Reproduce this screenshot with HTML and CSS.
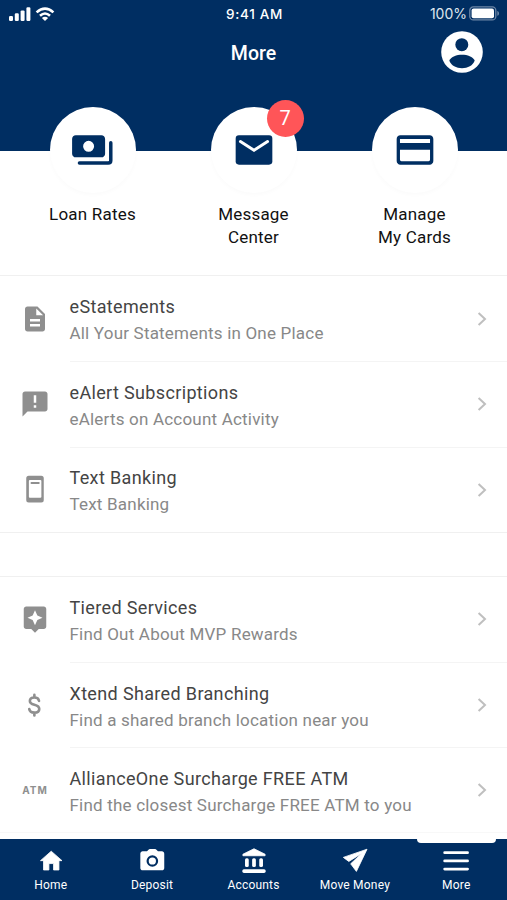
FILE: index.html
```html
<!DOCTYPE html>
<html lang="en">
    <head>
        <title>More</title>

        <meta charset="utf-8" />
        <meta name="viewport" content="width=device-width, initial-scale=1" />

        <link rel="stylesheet" href="styles.css">
    </head>
    <body>
        <div class="screen">
            <div class="header">
                <div class="status">
                    <div class="signal">
                        <svg width="22" height="14" viewBox="0 0 22 14">
                            <rect x="0" y="9" width="4" height="5" rx="1.2" />
                            <rect x="5.8" y="6.3" width="4" height="7.7" rx="1.2" />
                            <rect x="11.6" y="3.4" width="4" height="10.6" rx="1.2" />
                            <rect x="17.4" y="0.3" width="4" height="13.7" rx="1.2" />
                        </svg>
                        <svg class="wifi" width="20" height="14" viewBox="0 0 20 14">
                            <path class="arc" d="M1.6 5.4Q10 -2.2 18.4 5.4M5 8.8Q10 4.2 15 8.8" />
                            <path d="M6.9 11Q10 8.3 13.1 11L10 14Z" />
                        </svg>
                    </div>
                    <div class="time">9:41 AM</div>
                    <div class="battery">
                        100%
                        <svg width="31" height="15" viewBox="0 0 31 15">
                            <rect class="shell" x="0.8" y="0.9" width="26" height="13" rx="3.5" />
                            <rect x="2.6" y="2.6" width="22.4" height="9.6" rx="2" />
                            <path class="cap" d="M28.3 5C30.6 5.6 30.6 9.2 28.3 9.8Z" />
                        </svg>
                    </div>
                </div>
                <div class="titleBar">
                    <h1>More</h1>
                    <svg class="profile" width="42" height="42" viewBox="0 0 42 42">
                        <circle cx="21" cy="21" r="20.8" />
                        <circle class="cut" cx="20.8" cy="13.7" r="6.5" />
                        <path class="cut" d="M8.3 29.5C12 21.8 30 21.8 33.7 29.5C30.5 39.7 11.5 39.7 8.3 29.5Z" />
                    </svg>
                </div>
            </div>

            <div class="shortcuts">
                <div class="shortcut">
                    <div class="circle">
                        <svg width="44" height="44" viewBox="0.4 0 24 24">
                            <path d="M19 14V6c0-1.1-.9-2-2-2H3c-1.1 0-2 .9-2 2v8c0 1.1.9 2 2 2h14c1.1 0 2-.9 2-2zm-9-1a3 3 0 1 1 0-6 3 3 0 0 1 0 6z" />
                            <path class="line" d="M22.1 8v9.7q0 1.4-1.4 1.4H5" />
                        </svg>
                    </div>
                    <span>Loan Rates</span>
                </div>
                <div class="shortcut">
                    <div class="circle">
                        <svg width="44" height="44" viewBox="0 0 24 24">
                            <rect x="2" y="4" width="20" height="16" rx="1.8" />
                            <path class="line flap" d="M4.6 7.4L12 12.1L19.4 7.4" />
                        </svg>
                        <div class="badge">7</div>
                    </div>
                    <span>Message<br>Center</span>
                </div>
                <div class="shortcut">
                    <div class="circle">
                        <svg width="44" height="44" viewBox="0 0 24 24">
                            <path fill-rule="evenodd" d="M20 4H4c-1.1 0-2 .9-2 2v12c0 1.1.9 2 2 2h16c1.1 0 2-.9 2-2V6c0-1.1-.9-2-2-2zM20.2 17.3q0 .8-.8.8H4.6q-.8 0-.8-.8V11.9H20.2zM20.2 8.2H3.8V6h16.4z" />
                        </svg>
                    </div>
                    <span>Manage<br>My Cards</span>
                </div>
            </div>

            <ul class="list">
                <li>
                    <svg class="icon" viewBox="0 0 24 24"><path d="M14 2H6c-1.1 0-2 .9-2 2v16c0 1.1.9 2 2 2h12c1.1 0 2-.9 2-2V8l-6-6zm2 16H8v-2h8v2zm0-4H8v-2h8v2zm-3-5V3.5L18.5 9H13z" /></svg>
                    <div class="entry">
                        <div class="text"><b>eStatements</b><span>All Your Statements in One Place</span></div>
                        <svg class="chevron" viewBox="0 0 10 14"><path d="M1.6 1L8 7L1.6 13" /></svg>
                    </div>
                </li>
                <li>
                    <svg class="icon" viewBox="0 0 24 24"><path d="M20 2H4c-1.1 0-2 .9-2 2v18l4-4h14c1.1 0 2-.9 2-2V4c0-1.1-.9-2-2-2zm-7 13h-2v-2h2v2zm0-4h-2V5h2v6z" /></svg>
                    <div class="entry">
                        <div class="text"><b>eAlert Subscriptions</b><span>eAlerts on Account Activity</span></div>
                        <svg class="chevron" viewBox="0 0 10 14"><path d="M1.6 1L8 7L1.6 13" /></svg>
                    </div>
                </li>
                <li>
                    <svg class="icon" viewBox="0 0 24 24"><path fill-rule="evenodd" d="M7 1.3h10q2 0 2 2v17.4q0 2-2 2H7q-2 0-2-2V3.3q0-2 2-2zM7.9 4.8q-.8 0-.8.8V18.2q0 .8.8.8h8.4q.8 0 .8-.8V5.6q0-.8-.8-.8zM9.2 6.4h5.8q.8 0 .8.8t-.8.8H9.2q-.8 0-.8-.8t.8-.8z" /></svg>
                    <div class="entry">
                        <div class="text"><b>Text Banking</b><span>Text Banking</span></div>
                        <svg class="chevron" viewBox="0 0 10 14"><path d="M1.6 1L8 7L1.6 13" /></svg>
                    </div>
                </li>
            </ul>

            <ul class="list">
                <li>
                    <svg class="icon" viewBox="0 0 24 24"><path d="M19 2H5c-1.1 0-2 .9-2 2v14c0 1.1.9 2 2 2h4l3 3 3-3h4c1.1 0 2-.9 2-2V4c0-1.1-.9-2-2-2zm-5.12 10.88L12 17l-1.88-4.12L6 11l4.12-1.88L12 5l1.88 4.12L18 11l-4.12 1.88z" /></svg>
                    <div class="entry">
                        <div class="text"><b>Tiered Services</b><span>Find Out About MVP Rewards</span></div>
                        <svg class="chevron" viewBox="0 0 10 14"><path d="M1.6 1L8 7L1.6 13" /></svg>
                    </div>
                </li>
                <li>
                    <svg class="icon" viewBox="0 0 24 24"><path class="dollar" d="M15.2 8.7C14.9 6.9 13.6 6 11.5 6C9.4 6 7.9 7.1 7.9 8.7C7.9 10.5 9.3 11.2 11.5 11.8C13.9 12.4 15.4 13.3 15.4 15.2C15.4 17 13.9 18.1 11.5 18.1C9.2 18.1 7.7 17.1 7.4 15.2M11.5 3.9V5.5M11.5 18.5V20.3" /></svg>
                    <div class="entry">
                        <div class="text"><b>Xtend Shared Branching</b><span>Find a shared branch location near you</span></div>
                        <svg class="chevron" viewBox="0 0 10 14"><path d="M1.6 1L8 7L1.6 13" /></svg>
                    </div>
                </li>
                <li>
                    <div class="icon atm">ATM</div>
                    <div class="entry">
                        <div class="text"><b>AllianceOne Surcharge FREE ATM</b><span>Find the closest Surcharge FREE ATM to you</span></div>
                        <svg class="chevron" viewBox="0 0 10 14"><path d="M1.6 1L8 7L1.6 13" /></svg>
                    </div>
                </li>
            </ul>

            <div class="tabs">
                <div class="tab">
                    <svg viewBox="0 0 24 24"><path class="soft" d="M10.2 19.7v-5.5h4v5.5h4.6v-8h2.6L12.2 3.6 3 11.7h2.6v8z" /></svg>
                    Home
                </div>
                <div class="tab">
                    <svg viewBox="0 0 24 24"><path d="M9 2.3L7.7 3.7H4c-1.1 0-2 .9-2 2v12.3c0 1.1.9 2 2 2h16.5c1.1 0 2-.9 2-2V5.7c0-1.1-.9-2-2-2h-3.4L15.8 2.3q-.5-.5-1.2-.5H10.2q-.7 0-1.2.5zM12.3 17a5 5 0 1 1 0-10 5 5 0 0 1 0 10zm0-1.9a3.1 3.1 0 1 0 0-6.2 3.1 3.1 0 0 0 0 6.2z" /></svg>
                    Deposit
                </div>
                <div class="tab">
                    <svg viewBox="0 0 24 24">
                        <path class="soft" d="M12 1.5L2.5 6.2V7.5H21.5V6.2Z" />
                        <rect x="4.3" y="9.7" width="3.2" height="7.4" rx="1.3" />
                        <rect x="10.4" y="9.7" width="3.2" height="7.4" rx="1.3" />
                        <rect x="16.5" y="9.7" width="3.2" height="7.4" rx="1.3" />
                        <rect x="2" y="19" width="20" height="3.2" rx="1.4" />
                    </svg>
                    Accounts
                </div>
                <div class="tab">
                    <svg viewBox="0 0 24 24"><path class="soft" d="M22.3 1.9L2 8.9L6.7 12.4L18 5.3L8.3 14.4L13.2 20.9Z" /></svg>
                    Move Money
                </div>
                <div class="tab active">
                    <svg viewBox="0 0 24 24"><path class="bars" d="M2.3 4.9H21.9M2.3 11.9H21.9M2.3 18.9H21.9" /></svg>
                    More
                </div>
            </div>
        </div>
    </body>
</html>
```

FILE: styles.css
```css
* {
    box-sizing:         border-box;
}

body {
    background:         #fff;
    font-family:        Roboto, "Liberation Sans", sans-serif;
    margin:             0;
}

.screen {
    display:            flex;
    flex-direction:     column;
    height:             900px;
    overflow:           hidden;
    width:              507px;
}

svg {
    display:            block;
    flex:               none;
}

/* Header */
.header {
    background:         #002e62;
    color:              #fff;
    flex:               none;
    height:             151px;
}

.header svg {
    fill:               #fff;
}

.status {
    align-items:        center;
    display:            grid;
    font-family:        Inter, sans-serif;
    font-size:          13.5px;
    grid-template-columns: 1fr auto 1fr;
    height:             27px;
    padding:            0 7px 0 9px;
}

.signal, .battery {
    align-items:        center;
    display:            flex;
}

.signal {
    gap:                4px;
}

.header .arc {
    fill:               none;
    stroke:             #fff;
    stroke-width:       2.6;
}

.time {
    font-weight:        500;
    letter-spacing:     0.7px;
}

.battery {
    color:              #dfe6ee;
    font-size:          14px;
    gap:                2px;
    justify-content:    flex-end;
}

.header .shell {
    fill:               none;
    stroke:             #6c86a6;
    stroke-width:       1.3;
}

.header .cap {
    fill:               #6c86a6;
}

.titleBar {
    align-items:        center;
    display:            grid;
    grid-template-columns: 1fr auto 1fr;
    height:             50px;
    padding-right:      24px;
    padding-left:       24px;
}

.titleBar h1 {
    font-size:          19.5px;
    font-weight:        500;
    grid-column:        2;
    letter-spacing:     0;
    margin:             2px 0 0;
}

.titleBar .profile {
    justify-self:       end;
}

.header .cut {
    fill:               #002e62;
}

/* Round shortcuts, half over the header */
.shortcuts {
    display:            flex;
    flex:               none;
    height:             169px;
    justify-content:    space-between;
    margin-top:         -44px;
    padding:            0 12px;
}

.shortcut {
    align-items:        center;
    color:              #111;
    display:            flex;
    flex-direction:     column;
    font-size:          17px;
    gap:                10px;
    letter-spacing:     0.2px;
    line-height:        22.5px;
    text-align:         center;
    width:              161px;
}

.circle {
    align-items:        center;
    background:         #fff;
    border-radius:      50%;
    box-shadow:         0 2px 4px rgba( 0, 0, 0, 0.02 );
    display:            flex;
    height:             86px;
    justify-content:    center;
    position:           relative;
    width:              86px;
}

.circle svg {
    fill:               #002e62;
}

.circle .line {
    fill:               none;
    stroke:             #002e62;
    stroke-linecap:     round;
    stroke-width:       1.9;
}

.circle .flap {
    stroke:             #fff;
    stroke-width:       1.6;
}

.badge {
    background:         #ff5558;
    border-radius:      50%;
    color:              #fff;
    font-size:          20px;
    height:             37px;
    left:               56px;
    letter-spacing:     0;
    line-height:        37px;
    position:           absolute;
    top:                -7px;
    width:              37px;
}

/* Menu lists */
.list {
    border-bottom:      1px solid #f0f0f0;
    border-top:         1px solid #f0f0f0;
    flex:               none;
    list-style:         none;
    margin:             -1px 0 43px;
    padding:            0;
}

.list + .list {
    border-bottom-color: #f8f8f8;
    margin:             0;
}

.list li {
    display:            flex;
    align-items:        center;
    height:             85.3px;
}

.list + .list li {
    height:             85.1px;
}

.icon {
    fill:               #8f8f8f;
    height:             30px;
    margin:             0 19.5px 0 20px;
    width:              30px;
}

.icon .dollar {
    fill:               none;
    stroke:             #8f8f8f;
    stroke-linecap:     round;
    stroke-width:       2.1;
}

.atm {
    color:              #8f8f8f;
    flex:               none;
    font-family:        Inter, sans-serif;
    font-size:          10px;
    font-weight:        700;
    letter-spacing:     1px;
    line-height:        30px;
    text-align:         center;
}

.entry {
    align-items:        center;
    align-self:         stretch;
    display:            flex;
    flex:               1;
    justify-content:    space-between;
    padding-right:      20px;
}

.list li + li .entry {
    border-top:         1px solid #f4f4f4;
}

.text {
    padding-top:        3px;
}

.text b, .text span {
    display:            block;
    line-height:        26px;
    white-space:        nowrap;
}

.text b {
    color:              #444;
    font-size:          18px;
    font-weight:        400;
    letter-spacing:     0.35px;
}

.text span {
    color:              #888;
    font-size:          17px;
    letter-spacing:     0.2px;
}

.chevron {
    fill:               none;
    height:             14px;
    stroke:             #bfbfbf;
    stroke-width:       2;
    width:              10px;
}

/* Bottom tabs */
.tabs {
    background:         #002e62;
    bottom:             0;
    display:            flex;
    height:             61px;
    left:               0;
    position:           absolute;
    width:              507px;
}

.tab {
    align-items:        center;
    color:              #fff;
    display:            flex;
    flex:               1;
    flex-direction:     column;
    font-size:          12px;
    gap:                2px;
    letter-spacing:     0.2px;
    line-height:        16px;
    padding-top:        8px;
    position:           relative;
}

.tab svg {
    fill:               #fff;
    height:             28px;
    width:              28px;
}

.tab .soft {
    stroke:             #fff;
    stroke-linejoin:    round;
    stroke-width:       0.7;
}

.tab .bars {
    stroke:             #fff;
    stroke-linecap:     round;
    stroke-width:       2.4;
}

.tab.active:before {
    background:         #fff;
    border-radius:      0 0 4px 4px;
    content:            "";
    height:             4px;
    left:               11px;
    position:           absolute;
    right:              11px;
    top:                0;
}
```
